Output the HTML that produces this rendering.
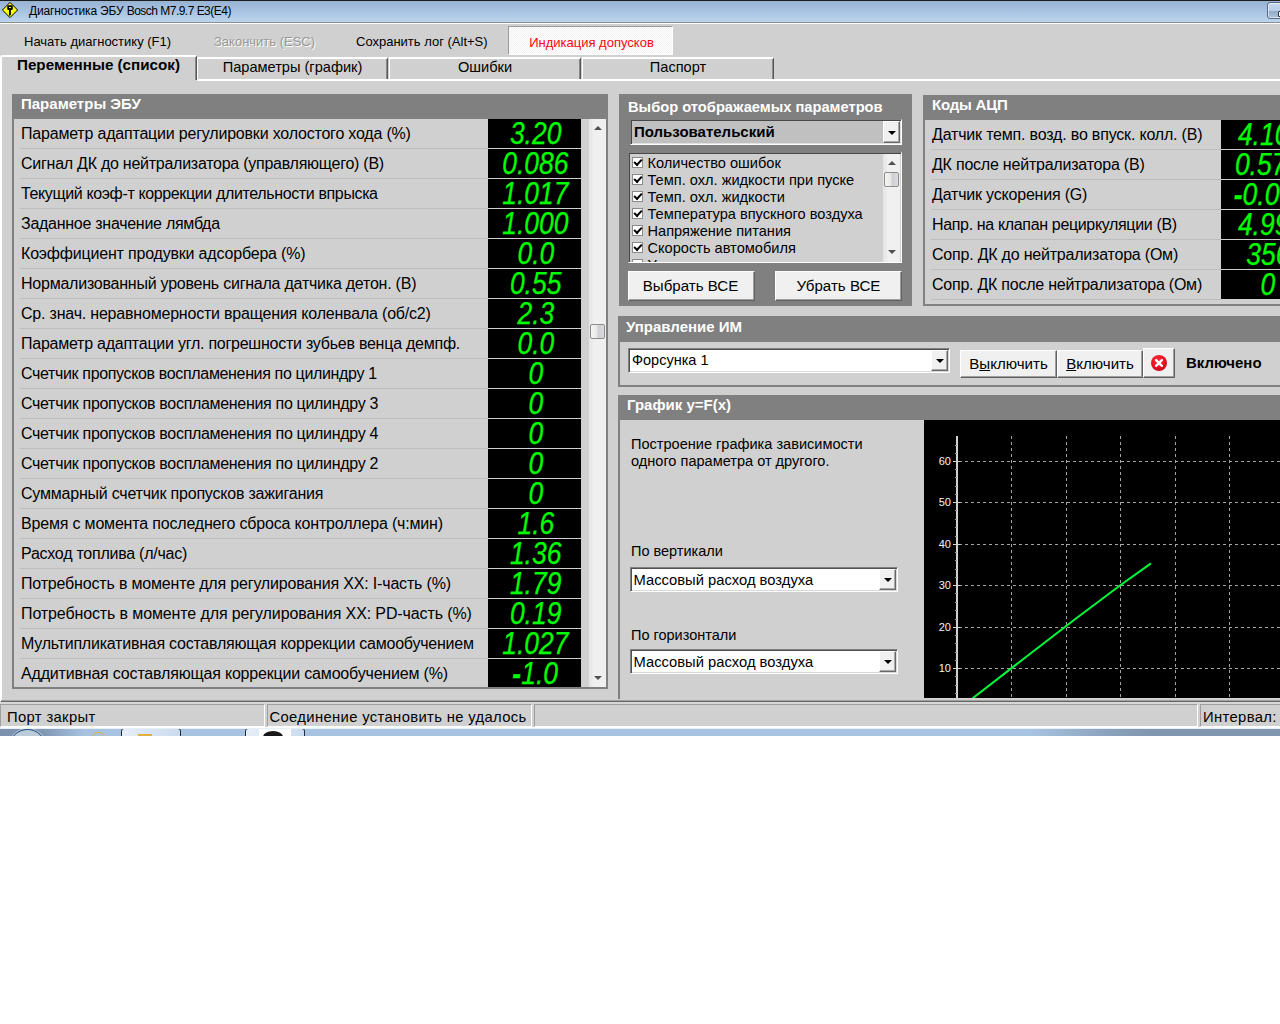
<!DOCTYPE html>
<html lang="ru"><head><meta charset="utf-8"><title>Диагностика ЭБУ Bosch M7.9.7 E3(E4)</title>
<style>
html,body{margin:0;padding:0;background:#fff;}
body{width:1280px;height:1024px;overflow:hidden;position:relative;font-family:"Liberation Sans",sans-serif;color:#000;}
#app{position:absolute;left:0;top:0;width:1280px;height:736px;background:#d0d0d0;overflow:hidden;}
#app div,#app span{position:absolute;box-sizing:border-box;white-space:nowrap;}
/* title bar */
#tb{left:0;top:0;width:1280px;height:22px;border-top:1px solid #1e1e1e;background:linear-gradient(#98b3d2,#a9c4e2 50%,#bcd5ee);}
#tbl1{left:0;top:22px;width:1280px;height:1px;background:#8e8e8e;}
#tbl2{left:0;top:23px;width:1280px;height:1px;background:#fff;}
#ttl{left:29px;top:3px;font:12px/16px "Liberation Sans",sans-serif;letter-spacing:-.15px;}
#ttl b{font-weight:normal;letter-spacing:-.52px;}
#minb{left:1267px;top:2px;width:30px;height:17px;border:1px solid #5a6a80;border-radius:3px;background:linear-gradient(#c6d8ee 0,#b9cee8 50%,#8fa9c8 51%,#a9c2de);box-shadow:inset 0 0 0 1px rgba(255,255,255,.55);}
#minb b{position:absolute;left:10px;top:8px;width:10px;height:4px;border:1px solid #333;background:#fff;border-radius:1px;}
/* toolbar */
.tbt{top:34px;font:13px/15px "Liberation Sans",sans-serif;}
.dis{color:#989898;text-shadow:1px 1px 0 #fff;}
#ind{left:508px;top:26px;width:165px;height:29px;background:repeating-conic-gradient(#fff 0 25%,#f0f0f0 0 50%) 0 0/2px 2px;border-top:1px solid #9a9a9a;border-left:1px solid #9a9a9a;border-right:1px solid #fff;border-bottom:1px solid #fff;color:#fa0812;font:13px/15px "Liberation Sans",sans-serif;text-align:center;padding-top:8px;}
/* tabs */
.tab{top:57px;height:23px;border-top:2px solid #fff;border-left:1px solid #fff;border-right:1px solid #545454;font:14.6px/17px "Liberation Sans",sans-serif;text-align:center;padding-top:0;}
.tab span{position:relative !important;top:-.5px;}
.tab:after{content:"";position:absolute;right:0;top:0;width:1px;height:100%;background:#8a8a8a;}
#t1{left:0;top:55px;width:197px;height:25px;border-left:2px solid #fff;border-top-left-radius:3px;font-weight:bold;font-size:15.2px;line-height:15px;padding-top:0;z-index:2;background:#d0d0d0;text-align:left;padding-left:15px;}
#tpt{left:197px;top:79px;width:1083px;height:2px;background:#fff;}
#tpl{left:0;top:79px;width:2px;height:622px;background:#fff;}
#tpb1{left:1px;top:700px;width:1279px;height:1px;background:#a0a0a0;}
#tpb2{left:1px;top:701px;width:1279px;height:1px;background:#666;}
#tpb3{left:0;top:702px;width:1280px;height:2px;background:#d7d7d7;}
/* panels */
.panel{background:#d0d0d0;border:2px solid #808080;border-top:0;overflow:hidden;}
.ph{left:-2px;top:0;height:25px;background:#808080;color:#fff;font:bold 15px/17px "Liberation Sans",sans-serif;padding:1px 0 0 9px;}
#pl{left:12px;top:94px;width:596px;height:595px;}
#pl .ph{width:596px;}
#pl .list{left:0;top:25px;width:592px;height:568px;overflow:hidden;}
.row{left:0;width:100%;height:30px;}
.row .lbl{left:7px;top:0;height:29px;font:16px/29px "Liberation Sans",sans-serif;}
.row:after{content:"";position:absolute;left:6px;width:468px;top:29px;height:1px;background:#bdbdbd;}
#pr .row:after{width:290px;}
.row .val{top:0;height:29px;background:#000;color:#00ff00;text-align:center;z-index:1;padding-left:2px;}
.row .val i{position:relative !important;display:inline-block;-webkit-text-stroke:.25px #00ff00;font:italic 31.5px/29px "Liberation Sans",sans-serif;transform:scaleX(.84);letter-spacing:0;}
#pl .val{left:474px;width:93px;}
/* scrollbars */
.sb{background:linear-gradient(90deg,#e4e4e4,#f0f0f0 30%,#f0f0f0);}
#sb1{left:575px;top:25px;width:17px;height:568px;}
.au,.ad{left:50%;width:0;height:0;border-left:4px solid transparent;border-right:4px solid transparent;margin-left:-4px;}
.au{border-bottom:4px solid #505050;}
.ad{border-top:4px solid #505050;}
.th{border:1px solid #8c8c8c;border-radius:2px;background:linear-gradient(90deg,#f4f4f4,#e8e8e8 45%,#cfcfd2 55%,#dcdce0);}
#sb1 .au{top:7px;} #sb1 .ad{top:557px;}
#sb1 .th{left:1px;top:205px;width:15px;height:15px;}
/* middle panel */
#pm{left:619px;top:94px;width:293px;height:212px;background:#808080;}
.pt{color:#fff;font:bold 14.7px/17px "Liberation Sans",sans-serif;}
.sunk{border:1px solid;border-color:#808080 #fff #fff #808080;}
#dd1{left:11px;top:25px;width:272px;height:26px;background:#c0c0c0;box-shadow:inset 1px 1px 0 #484848,inset -1px -1px 0 #e0e0e0;}
.ddt{left:3px;top:3px;font:bold 15px/17px "Liberation Sans",sans-serif;}
.ddb{right:1px;top:1px;bottom:1px;width:17px;background:#f0f0f0;border:1px solid;border-color:#fff #686868 #686868 #fff;box-shadow:inset -1px -1px 0 #a8a8a8;}
.ddb .ad{top:50%;margin-top:-1.5px;border-top-color:#000;}
#lb{left:9px;top:58px;width:274px;height:111px;background:#d0d0d0;overflow:hidden;box-shadow:inset 1px 1px 0 #484848;}
.ci{left:18.5px;height:17px;font:14.6px/17px "Liberation Sans",sans-serif;}
.cb{left:-16px;top:2px;width:11px;height:11px;background:#fff;border:1px solid #8a8a8a;}
.cb.on:after{content:"";position:absolute;left:1.5px;top:.8px;width:6px;height:3px;border-left:2px solid #000;border-bottom:2px solid #000;transform:rotate(-47deg);transform-origin:center;}
#sb2{right:1px;top:1px;width:17px;height:108px;}
#sb2 .au{top:7px;} #sb2 .ad{top:96px;}
#sb2 .th{left:1px;top:18px;width:15px;height:15px;}
.btn{background:#f0f0f0;border:1px solid;border-color:#fff #606060 #606060 #fff;box-shadow:inset -1px -1px 0 #a0a0a0;font:15.1px/28px "Liberation Sans",sans-serif;text-align:center;}
/* right panel */
#pr{left:923px;top:95px;width:400px;height:211px;}
#pr .ph{width:400px;height:25px;padding-top:1px;letter-spacing:-.2px;}
#pr .list{left:0;top:25px;width:400px;height:184px;}
#pr .val{left:296px;width:93px;}
/* lower panels */
#pu{left:618px;top:316px;width:700px;height:71px;}
#pu .ph{width:700px;height:26px;padding:2px 0 0 8px;left:-2px;}
.combo{background:#fff;box-shadow:inset 1px 1px 0 #505050,inset -1px -1px 0 #d8d8d8;}
.cbt{left:3px;top:3px;font:14.5px/17px "Liberation Sans",sans-serif;}
.b2{font-size:15.1px;line-height:26px;}
#pg{left:618px;top:395px;width:700px;height:304px;border-bottom:0;}
#pg .ph{width:700px;}
/* status bar */
.sp{top:704px;height:23px;border:1px solid;border-color:#9e9e9e #fff #fff #9e9e9e;font:14.8px/20px "Liberation Sans",sans-serif;letter-spacing:.35px;}
.sp span{left:4px;top:2px;}
#stl{left:0;top:727px;width:1280px;height:1px;background:#fff;}
#tk{left:0;top:728px;width:1280px;height:8px;overflow:hidden;background:linear-gradient(90deg,#7b90ac 0,#8299b5 45px,#a8c3e1 85px,#a9c4e2 1030px,#8aa1bb 1110px,#8197b0 1150px,#8197b0);border-top:1px solid #e6eef6;}
.orb{left:9px;top:0;width:37px;height:37px;border-radius:50%;border:1.5px solid #1d4b7e;background:#bccbd8;box-shadow:0 0 0 1px rgba(255,255,255,.35);}
.gd{left:92px;top:3px;width:13px;height:10px;border-radius:50%;border:1.5px solid #e2b23c;}
.tkb{top:-1px;width:60px;height:12px;border:1px solid #222c38;border-radius:3px;background:linear-gradient(90deg,#e6eef8,#cbdbee);}
#app em{position:absolute;display:block;}
</style></head>
<body>
<div id="app">
<div id="tb"></div><div id="tbl1"></div><div id="tbl2"></div>
<svg id="ico" style="position:absolute;left:0;top:0" width="22" height="22" viewBox="0 0 22 22"><path d="M10 2.4 L17.6 10 L10 17.6 L2.4 10 Z" fill="#ffff00" stroke="#000" stroke-width="1" stroke-linejoin="miter"/><rect x="7.2" y="5.2" width="5.6" height="4.8" rx="1.3" fill="#000"/><path d="M9 9.5 H10.9 V14.6 L9.9 15.7 H9 Z" fill="#000"/><rect x="9" y="7" width="2" height="1" fill="#ffff00"/></svg>
<div id="ttl">Диагностика ЭБУ <b>Bosch M7.9.7 E3(E4)</b></div>
<div id="minb"><b></b></div>
<div class="tbt" style="left:24px">Начать диагностику (F1)</div>
<div class="tbt dis" style="left:214px">Закончить (ESC)</div>
<div class="tbt" style="left:356px">Сохранить лог (Alt+S)</div>
<div id="ind" style="padding-left:2px">Индикация допусков</div>
<div class="tab" id="t1">Переменные (список)</div>
<div class="tab" style="left:197px;width:191px"><span>Параметры (график)</span></div>
<div class="tab" style="left:389px;width:192px"><span>Ошибки</span></div>
<div class="tab" style="left:582px;width:192px"><span>Паспорт</span></div>
<div id="tpt"></div><div id="tpl"></div><div id="tpb1"></div><div id="tpb2"></div><div id="tpb3"></div>
<div class="panel" id="pl"><div class="ph">Параметры ЭБУ</div><div class="list">
<div class="row" style="top:0px"><span class="lbl" style="letter-spacing:-0.198px">Параметр адаптации регулировки холостого хода (%)</span><span class="val"><i>3.20</i></span></div>
<div class="row" style="top:30px"><span class="lbl" style="letter-spacing:-0.256px">Сигнал ДК до нейтрализатора (управляющего) (В)</span><span class="val"><i>0.086</i></span></div>
<div class="row" style="top:60px"><span class="lbl" style="letter-spacing:-0.369px">Текущий коэф-т коррекции длительности впрыска</span><span class="val"><i>1.017</i></span></div>
<div class="row" style="top:90px"><span class="lbl" style="letter-spacing:-0.272px">Заданное значение лямбда</span><span class="val"><i>1.000</i></span></div>
<div class="row" style="top:120px"><span class="lbl" style="letter-spacing:-0.189px">Коэффициент продувки адсорбера (%)</span><span class="val"><i>0.0</i></span></div>
<div class="row" style="top:150px"><span class="lbl" style="letter-spacing:-0.235px">Нормализованный уровень сигнала датчика детон. (В)</span><span class="val"><i>0.55</i></span></div>
<div class="row" style="top:180px"><span class="lbl" style="letter-spacing:-0.201px">Ср. знач. неравномерности вращения коленвала (об/с2)</span><span class="val"><i>2.3</i></span></div>
<div class="row" style="top:210px"><span class="lbl" style="letter-spacing:-0.245px">Параметр адаптации угл. погрешности зубьев венца демпф.</span><span class="val"><i>0.0</i></span></div>
<div class="row" style="top:240px"><span class="lbl" style="letter-spacing:-0.347px">Счетчик пропусков воспламенения по цилиндру 1</span><span class="val"><i>0</i></span></div>
<div class="row" style="top:270px"><span class="lbl" style="letter-spacing:-0.318px">Счетчик пропусков воспламенения по цилиндру 3</span><span class="val"><i>0</i></span></div>
<div class="row" style="top:300px"><span class="lbl" style="letter-spacing:-0.318px">Счетчик пропусков воспламенения по цилиндру 4</span><span class="val"><i>0</i></span></div>
<div class="row" style="top:330px"><span class="lbl" style="letter-spacing:-0.318px">Счетчик пропусков воспламенения по цилиндру 2</span><span class="val"><i>0</i></span></div>
<div class="row" style="top:360px"><span class="lbl" style="letter-spacing:-0.215px">Суммарный счетчик пропусков зажигания</span><span class="val"><i>0</i></span></div>
<div class="row" style="top:390px"><span class="lbl" style="letter-spacing:-0.183px">Время с момента последнего сброса контроллера (ч:мин)</span><span class="val"><i>1.6</i></span></div>
<div class="row" style="top:420px"><span class="lbl" style="letter-spacing:-0.250px">Расход топлива (л/час)</span><span class="val"><i>1.36</i></span></div>
<div class="row" style="top:450px"><span class="lbl" style="letter-spacing:-0.176px">Потребность в моменте для регулирования ХХ: I-часть (%)</span><span class="val"><i>1.79</i></span></div>
<div class="row" style="top:480px"><span class="lbl" style="letter-spacing:-0.118px">Потребность в моменте для регулирования ХХ: PD-часть (%)</span><span class="val"><i>0.19</i></span></div>
<div class="row" style="top:510px"><span class="lbl" style="letter-spacing:-0.236px">Мультипликативная составляющая коррекции самообучением</span><span class="val"><i>1.027</i></span></div>
<div class="row" style="top:540px"><span class="lbl" style="letter-spacing:-0.185px">Аддитивная составляющая коррекции самообучением (%)</span><span class="val"><i><b>-</b>1.0</i></span></div>
</div><div class="sb" id="sb1"><span class="au"></span><span class="th"></span><span class="ad"></span></div></div>
<div id="pm">
<div class="pt" style="left:9px;top:5px">Выбор отображаемых параметров</div>
<div class="sunk" id="dd1"><span class="ddt">Пользовательский</span><span class="ddb"><span class="ad"></span></span></div>
<div class="sunk" id="lb">
<div class="ci" style="top:2px"><span class="cb on"></span>Количество ошибок</div>
<div class="ci" style="top:19px"><span class="cb on"></span>Темп. охл. жидкости при пуске</div>
<div class="ci" style="top:36px"><span class="cb on"></span>Темп. охл. жидкости</div>
<div class="ci" style="top:53px"><span class="cb on"></span>Температура впускного воздуха</div>
<div class="ci" style="top:70px"><span class="cb on"></span>Напряжение питания</div>
<div class="ci" style="top:87px"><span class="cb on"></span>Скорость автомобиля</div>
<div class="ci" style="top:104px"><span class="cb"></span>Угол опережения зажигания</div>
<div class="sb" id="sb2"><span class="au"></span><span class="th"></span><span class="ad"></span></div>
</div>
<div class="btn" style="left:9px;top:177px;width:127px;height:30px;padding-right:2px">Выбрать ВСЕ</div>
<div class="btn" style="left:156px;top:177px;width:127px;height:30px">Убрать ВСЕ</div>
</div>
<div class="panel" id="pr"><div class="ph">Коды АЦП</div><div class="list">
<div class="row" style="top:0px"><span class="lbl" style="letter-spacing:-0.186px">Датчик темп. возд. во впуск. колл. (В)</span><span class="val"><i style="left:-4.4px">4.10</i></span></div>
<div class="row" style="top:30px"><span class="lbl" style="letter-spacing:-0.219px">ДК после нейтрализатора (В)</span><span class="val"><i style="left:-7.4px">0.57</i></span></div>
<div class="row" style="top:60px"><span class="lbl" style="letter-spacing:-0.195px">Датчик ускорения (G)</span><span class="val"><i style="left:-4.8px"><b>-</b>0.09</i></span></div>
<div class="row" style="top:90px"><span class="lbl" style="letter-spacing:-0.345px">Напр. на клапан рециркуляции (В)</span><span class="val"><i style="left:-5px">4.99</i></span></div>
<div class="row" style="top:120px"><span class="lbl" style="letter-spacing:-0.210px">Сопр. ДК до нейтрализатора (Ом)</span><span class="val"><i style="left:-0.6px">356</i></span></div>
<div class="row" style="top:150px"><span class="lbl" style="letter-spacing:-0.239px">Сопр. ДК после нейтрализатора (Ом)</span><span class="val"><i style="left:-0.4px">0</i></span></div>
</div></div>
<div class="panel" id="pu"><div class="ph">Управление ИМ</div>
<div class="sunk combo" style="left:8px;top:32px;width:322px;height:25px"><span class="cbt">Форсунка 1</span><span class="ddb"><span class="ad"></span></span></div>
<div class="btn b2" style="left:340px;top:34px;width:97px;height:28px">В<u>ы</u>ключить</div>
<div class="btn b2" style="left:437px;top:34px;width:86px;height:28px"><u>В</u>ключить</div>
<div class="btn" style="left:523px;top:32px;width:32px;height:30px"><svg width="20" height="20" viewBox="0 0 20 20" style="position:absolute;left:5px;top:4px"><defs><radialGradient id="rg" cx=".4" cy=".3" r=".75"><stop offset="0" stop-color="#f4303c"/><stop offset=".6" stop-color="#e81123"/><stop offset="1" stop-color="#c80a18"/></radialGradient></defs><circle cx="10" cy="10" r="8" fill="url(#rg)"/><path d="M7.1 7.1 L12.9 12.9 M12.9 7.1 L7.1 12.9" stroke="#fff" stroke-width="2.3" stroke-linecap="round"/></svg></div>
<div style="left:566px;top:38px;font:bold 15px/17px 'Liberation Sans',sans-serif">Включено</div>
</div>
<div class="panel" id="pg"><div class="ph">График y=F(x)</div>
<div style="left:11px;top:41px;font:14.55px/17px 'Liberation Sans',sans-serif">Построение графика зависимости<br>одного параметра от другого.</div>
<div style="left:11px;top:147.7px;font:14.5px/17px 'Liberation Sans',sans-serif">По вертикали</div>
<div class="sunk combo" style="left:10px;top:172px;width:268px;height:25px"><span class="cbt" style="font-size:14.75px;top:4px;left:2.5px">Массовый расход воздуха</span><span class="ddb"><span class="ad"></span></span></div>
<div style="left:11px;top:231.7px;font:14.5px/17px 'Liberation Sans',sans-serif">По горизонтали</div>
<div class="sunk combo" style="left:10px;top:254px;width:268px;height:25px"><span class="cbt" style="font-size:14.75px;top:4px;left:2.5px">Массовый расход воздуха</span><span class="ddb"><span class="ad"></span></span></div>
<svg id="chart" style="position:absolute;left:304px;top:25px" width="360" height="278" viewBox="0 0 360 278">
<rect width="360" height="278" fill="#000"/>
<g stroke="#a4a4a4" stroke-width="1" stroke-dasharray="3 3" fill="none" shape-rendering="crispEdges">
<path d="M35 41.5H360M35 82.5H360M35 124.5H360M35 165.5H360M35 207.5H360M35 248.5H360"/>
<path d="M87.5 16V278M142.5 16V278M196.5 16V278M251.5 16V278M305.5 16V278"/>
</g>
<g stroke="#d2d2d2" fill="none" shape-rendering="crispEdges">
<path d="M33 16V278" stroke-width="2"/>
<path d="M29 41.5H36M29 82.5H36M29 124.5H36M29 165.5H36M29 207.5H36M29 248.5H36" stroke-width="1"/>
<path d="M31 25.5H33M31 33.5H33M31 49.5H33M31 57.5H33M31 66.5H33M31 74.5H33M31 90.5H33M31 99.5H33M31 107.5H33M31 116.5H33M31 132.5H33M31 140.5H33M31 149.5H33M31 157.5H33M31 173.5H33M31 182.5H33M31 190.5H33M31 199.5H33M31 215.5H33M31 223.5H33M31 232.5H33M31 240.5H33M31 256.5H33M31 265.5H33M31 273.5H33" stroke="#a0a0a0" stroke-width="1"/>
</g>
<g fill="#f4f4f4" font-family="Liberation Sans, sans-serif" font-size="11" text-anchor="end">
<text x="27" y="44.7">60</text><text x="27" y="85.7">50</text><text x="27" y="127.7">40</text><text x="27" y="168.7">30</text><text x="27" y="210.7">20</text><text x="27" y="251.7">10</text>
</g>
<path d="M49 278 L100 238.5 L150 200 L196.3 165.3 L226.3 143.8" stroke="#00f83c" stroke-width="2.05" fill="none" stroke-linecap="round" stroke-linejoin="round"/>
</svg>
</div>
<div id="st"></div>
<div class="sp" style="left:0;width:265px"><span style="left:6px">Порт закрыт</span></div>
<div class="sp" style="left:267px;width:265px"><span style="left:1.5px">Соединение установить не удалось</span></div>
<div class="sp" style="left:534px;width:664px"></div>
<div class="sp" style="left:1200px;width:100px"><span style="left:2px">Интервал: 1</span></div>
<div id="stl"></div>
<div id="tk"><span class="orb"></span><span class="gd"></span><span class="tkb" style="left:121px"><em style="left:16px;top:5px;width:14px;height:3px;background:#e0b040"></em></span><span class="tkb" style="left:245px"><em style="left:13px;top:0;width:32px;height:8px;background:#fff"></em><em style="left:17px;top:2px;width:20px;height:12px;border-radius:50%;background:#181818"></em></span></div>
</div>
</body></html>
